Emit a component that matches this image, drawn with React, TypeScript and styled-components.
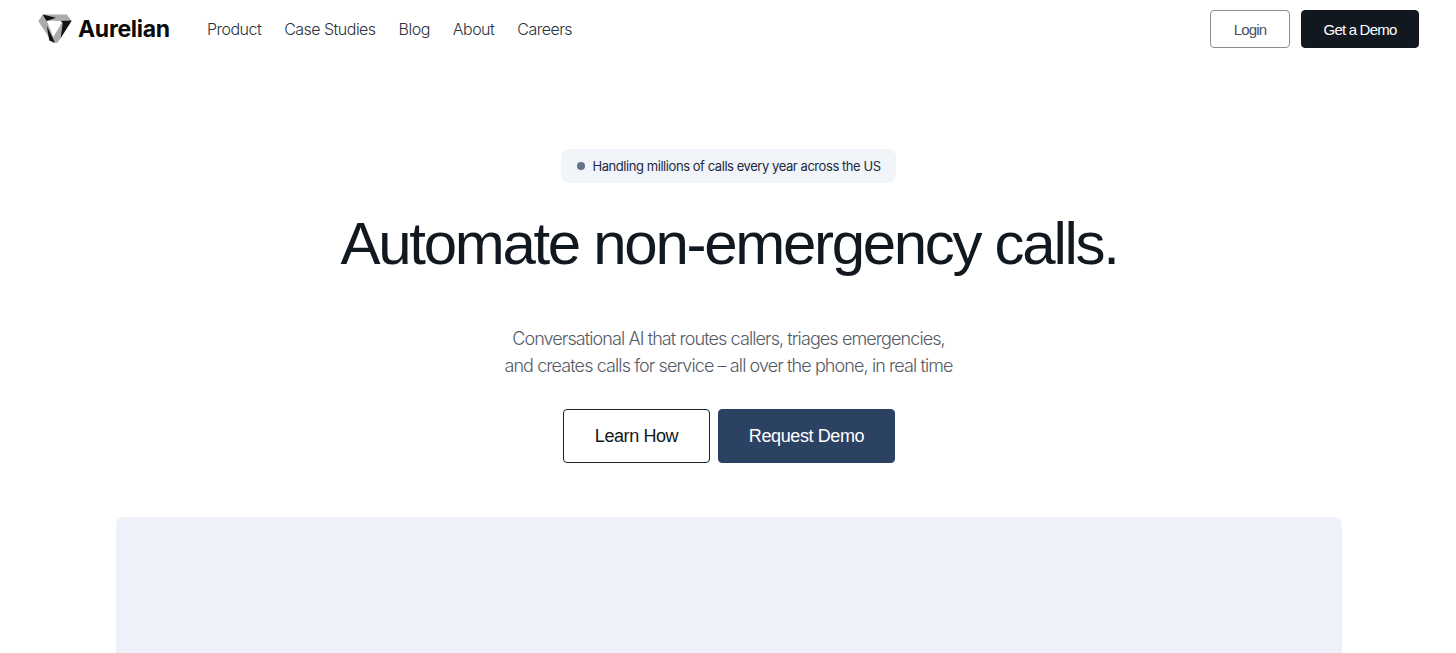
import styled, { createGlobalStyle } from "styled-components";

const GlobalStyle = createGlobalStyle`
  html, body {
    margin: 0;
    padding: 0;
    background: #ffffff;
    font-family: "Inter", "Liberation Sans", sans-serif;
  }
  * {
    box-sizing: border-box;
  }
`;

const grotesk = `"Liberation Sans", Arial, sans-serif`;

const Header = styled.header`
  display: flex;
  align-items: center;
  height: 58px;
  padding: 0 37px 0 38px;
`;

const Brand = styled.a`
  display: flex;
  align-items: center;
  gap: 5px;
  width: 169px;
  font-size: 23px;
  font-weight: 700;
  letter-spacing: -0.3px;
  color: #0a0a0a;
`;

const Nav = styled.nav`
  display: flex;
  align-items: center;
  gap: 23px;
  flex: 1;
`;

const NavLink = styled.a`
  font-size: 16px;
  font-weight: 300;
  letter-spacing: -0.52px;
  color: #2b3240;
`;

const Actions = styled.div`
  display: flex;
  gap: 11px;
`;

const HeaderButton = styled.button<{ $dark?: boolean; $width: number }>`
  width: ${(p) => p.$width}px;
  height: 38px;
  border-radius: 4px;
  border: 1px solid ${(p) => (p.$dark ? "#111820" : "#8c8c8c")};
  background: ${(p) => (p.$dark ? "#111820" : "#ffffff")};
  color: ${(p) => (p.$dark ? "#ffffff" : "#4a5160")};
  font-family: ${grotesk};
  font-size: 15px;
  font-weight: 400;
  letter-spacing: -0.8px;
`;

const Hero = styled.main`
  display: flex;
  flex-direction: column;
  align-items: center;
  padding-top: 91px;
`;

const Pill = styled.div`
  display: flex;
  align-items: center;
  gap: 8px;
  width: 335px;
  height: 34px;
  padding-left: 16px;
  border-radius: 8px;
  background: #f1f4f9;
  font-size: 13px;
  font-weight: 400;
  letter-spacing: -0.44px;
  color: #1d2a3f;
`;

const Dot = styled.span`
  width: 8px;
  height: 8px;
  border-radius: 50%;
  background: #64718a;
`;

const Title = styled.h1`
  margin: 19px 0 0;
  padding-left: 2px;
  font-family: ${grotesk};
  font-size: 60px;
  line-height: 84px;
  font-weight: 400;
  letter-spacing: -2.3px;
  color: #111820;
`;

const Lead = styled.p`
  margin: 39px 0 0;
  padding-left: 1px;
  text-align: center;
  font-size: 18px;
  line-height: 27px;
  font-weight: 300;
  letter-spacing: -0.9px;
  color: #555b66;
`;

const CtaRow = styled.div`
  display: flex;
  gap: 8px;
  margin-top: 30px;
  padding-left: 2px;
`;

const CtaButton = styled.button<{ $primary?: boolean; $width: number }>`
  width: ${(p) => p.$width}px;
  height: 54px;
  border-radius: 4px;
  border: 1px solid ${(p) => (p.$primary ? "#2a4163" : "#1c2430")};
  background: ${(p) => (p.$primary ? "#2c4263" : "#ffffff")};
  color: ${(p) => (p.$primary ? "#ffffff" : "#111820")};
  font-family: ${grotesk};
  font-size: 18px;
  font-weight: 400;
  letter-spacing: -0.4px;
`;

const Panel = styled.section`
  height: 136px;
  margin: 54px 114px 0 116px;
  border-radius: 8px 8px 0 0;
  background: #eef1f9;
`;

const Logo = () => (
  <svg width="35" height="30" viewBox="0 0 35 30" aria-hidden="true">
    <path d="M4.7.5h24l5 6.7L19.500 28.800h-5L.3 7.200z" fill="#ababab" />
    <path d="M8.700 6.500l16 .7L15.300 23z" fill="#ffffff" />
    <path d="M4.700.5L18 3.800 8.700 7 8 6z" fill="#111111" />
    <path d="M33.700 6.500L22.700 24l2-15-2-2z" fill="#111111" />
    <path d="M8.700 11.500L17 28.800l-5.700-2.300z" fill="#111111" />
  </svg>
);

export default function App() {
  return (
    <>
      <GlobalStyle />
      <Header>
        <Brand>
          <Logo />
          Aurelian
        </Brand>
        <Nav>
          <NavLink>Product</NavLink>
          <NavLink>Case Studies</NavLink>
          <NavLink>Blog</NavLink>
          <NavLink>About</NavLink>
          <NavLink>Careers</NavLink>
        </Nav>
        <Actions>
          <HeaderButton $width={80}>Login</HeaderButton>
          <HeaderButton $dark $width={118}>Get a Demo</HeaderButton>
        </Actions>
      </Header>
      <Hero>
        <Pill>
          <Dot />
          Handling millions of calls every year across the US
        </Pill>
        <Title>Automate non-emergency calls.</Title>
        <Lead>
          Conversational AI that routes callers, triages emergencies,
          <br />
          and creates calls for service – all over the phone, in real time
        </Lead>
        <CtaRow>
          <CtaButton $width={147}>Learn How</CtaButton>
          <CtaButton $primary $width={177}>Request Demo</CtaButton>
        </CtaRow>
      </Hero>
      <Panel />
    </>
  );
}
